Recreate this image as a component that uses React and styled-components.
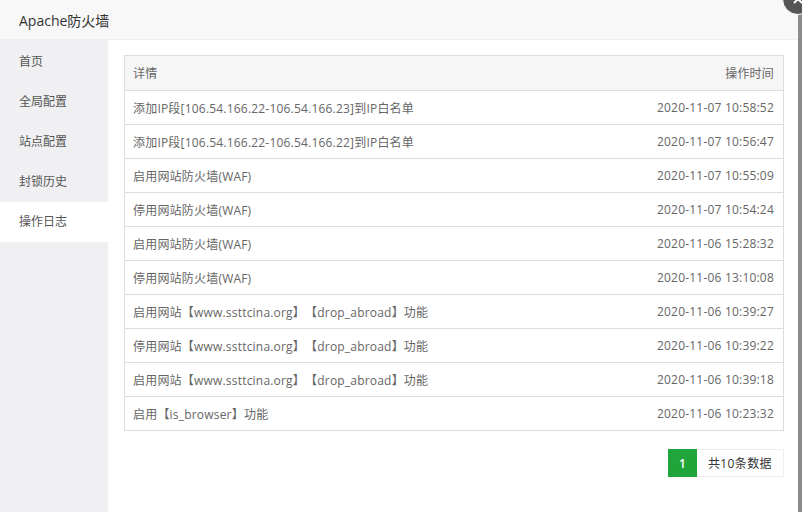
import React from "react";
import styled, { createGlobalStyle } from "styled-components";

const Global = createGlobalStyle`
  html, body { margin: 0; padding: 0; }
  body {
    width: 802px;
    height: 512px;
    overflow: hidden;
    background: #8c8c8c;
    font-family: "Open Sans", "Noto Sans CJK SC", sans-serif;
    text-spacing-trim: space-all;
  }
`;

const Layer = styled.div`
  position: relative;
  width: 798px;
  height: 512px;
  background: #fff;
  display: flex;
  flex-direction: column;
`;

const Header = styled.div`
  height: 40px;
  flex: none;
  box-sizing: border-box;
  padding-left: 19px;
  display: flex;
  align-items: center;
  background: #f8f8f8;
  border-bottom: 1px solid #eee;
  font-size: 14px;
  color: #333;
`;

const Close = styled.div`
  position: absolute;
  top: -17px;
  right: -16px;
  width: 30px;
  height: 30px;
  border-radius: 50%;
  background: #555;
  border: 1px solid #fff;
  display: flex;
  align-items: center;
  justify-content: center;
`;

const Body = styled.div`
  flex: 1;
  display: flex;
`;

const Side = styled.div`
  width: 108px;
  flex: none;
  background: #f0f0f2;
  padding-top: 2px;
`;

const NavItem = styled.div`
  height: 40px;
  line-height: 40px;
  padding-left: 19px;
  font-size: 12px;
  color: #555;
  background: ${(p) => (p.$active ? "#fff" : "transparent")};
`;

const Main = styled.div`
  flex: 1;
  padding: 15px 14px 0 16px;
`;

const Table = styled.div`
  border: 1px solid #ddd;
  font-size: 12px;
  color: #666;
  letter-spacing: 0.2px;
`;

const Row = styled.div`
  height: 34px;
  box-sizing: border-box;
  display: flex;
  align-items: center;
  justify-content: space-between;
  padding: 0 9px 0 8px;
  border-top: ${(p) => (p.$first ? "none" : "1px solid #ddd")};
  background: ${(p) => (p.$head ? "#f6f6f6" : "#fff")};
`;

const Pager = styled.div`
  display: flex;
  justify-content: flex-end;
  margin-top: 18px;
  font-size: 12px;
`;

const PageNum = styled.span`
  width: 29px;
  height: 28px;
  display: flex;
  align-items: center;
  justify-content: center;
  background: #20a53a;
  color: #fff;
  font-weight: 600;
`;

const PageInfo = styled.span`
  height: 28px;
  box-sizing: border-box;
  padding: 0 11px 0 11px;
  display: flex;
  align-items: center;
  border: 1px solid #eee;
  border-left: none;
  color: #333;
  letter-spacing: 0.4px;
`;

const nav = ["首页", "全局配置", "站点配置", "封锁历史", "操作日志"];

const logs = [
  ["添加IP段[106.54.166.22-106.54.166.23]到IP白名单", "2020-11-07 10:58:52"],
  ["添加IP段[106.54.166.22-106.54.166.22]到IP白名单", "2020-11-07 10:56:47"],
  ["启用网站防火墙(WAF)", "2020-11-07 10:55:09"],
  ["停用网站防火墙(WAF)", "2020-11-07 10:54:24"],
  ["启用网站防火墙(WAF)", "2020-11-06 15:28:32"],
  ["停用网站防火墙(WAF)", "2020-11-06 13:10:08"],
  ["启用网站【www.ssttcina.org】【drop_abroad】功能", "2020-11-06 10:39:27"],
  ["停用网站【www.ssttcina.org】【drop_abroad】功能", "2020-11-06 10:39:22"],
  ["启用网站【www.ssttcina.org】【drop_abroad】功能", "2020-11-06 10:39:18"],
  ["启用【is_browser】功能", "2020-11-06 10:23:32"],
];

export default function App() {
  return (
    <>
      <Global />
      <Layer>
        <Header>Apache防火墙</Header>
        <Close>
          <svg width="12" height="12" viewBox="0 0 12 12">
            <path d="M2 2L10 10M10 2L2 10" stroke="#fff" strokeWidth="2" />
          </svg>
        </Close>
        <Body>
          <Side>
            {nav.map((n) => (
              <NavItem key={n} $active={n === "操作日志"}>
                {n}
              </NavItem>
            ))}
          </Side>
          <Main>
            <Table>
              <Row $head $first>
                <span>详情</span>
                <span>操作时间</span>
              </Row>
              {logs.map(([d, t], i) => (
                <Row key={i}>
                  <span>{d}</span>
                  <span>{t}</span>
                </Row>
              ))}
            </Table>
            <Pager>
              <PageNum>1</PageNum>
              <PageInfo>共10条数据</PageInfo>
            </Pager>
          </Main>
        </Body>
      </Layer>
    </>
  );
}
